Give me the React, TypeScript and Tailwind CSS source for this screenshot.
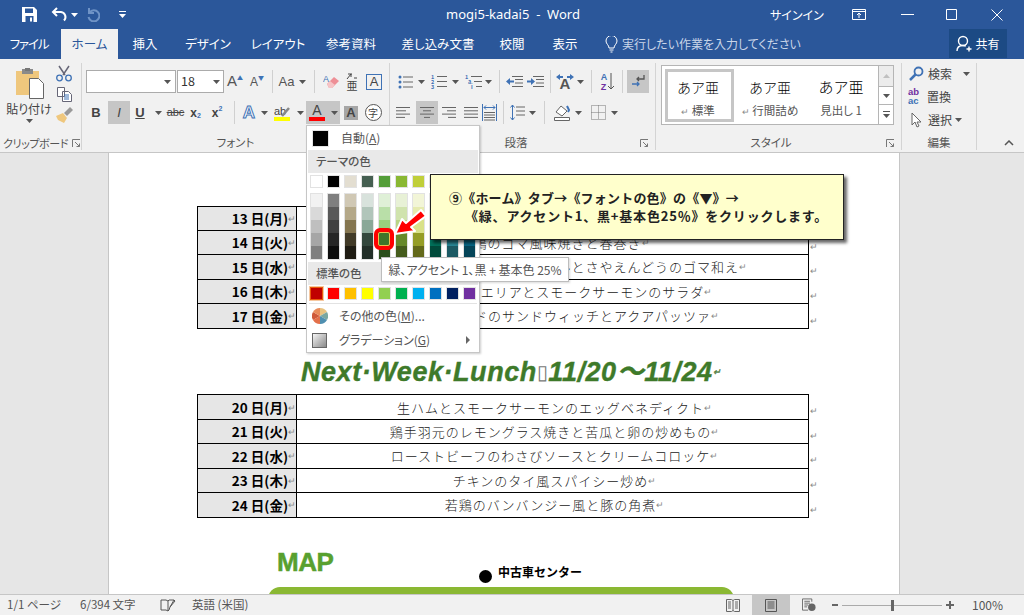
import type { ReactNode } from 'react'

const Caret = ({ color = '#555' }: { color?: string }) => (
  <svg width="7" height="4" viewBox="0 0 7 4"><path d="M0 0h7L3.5 4z" fill={color} /></svg>
)

function Cell({ w, children, active }: { w: string; children?: ReactNode; active?: boolean }) {
  return (
    <div className={`${w} h-[23px] flex items-center justify-center shrink-0 ${active ? 'bg-[#c6c6c6]' : ''}`}>{children}</div>
  )
}

const Sep = ({ w }: { w: string }) => (
  <div className={`${w} h-[23px] flex justify-center shrink-0`}><div className="w-px h-full bg-[#d0d0d0]" /></div>
)

const Launcher = () => (
  <svg width="9" height="9" viewBox="0 0 9 9" fill="none" stroke="#777"><path d="M.5 8V.5H8M3 3l4.5 4.5M7.5 4.5v3h-3" /></svg>
)

const Lines = ({ kind }: { kind: 'l' | 'c' | 'r' | 'j' }) => {
  const rows = kind === 'l' ? [[1, 15], [1, 11], [1, 15], [1, 10]]
    : kind === 'c' ? [[1, 15], [4, 12], [1, 15], [5, 11]]
    : kind === 'r' ? [[1, 15], [6, 15], [1, 15], [7, 15]]
    : [[1, 15], [1, 15], [1, 15], [1, 15]]
  return (
    <svg width="16" height="13" viewBox="0 0 16 13" stroke="#666">
      {rows.map((r, i) => <path key={i} d={`M${r[0]} ${1.5 + i * 3.3}H${r[1]}`} />)}
    </svg>
  )
}

const theme = ['#ffffff', '#000000', '#e3ded1', '#455f51', '#549e39', '#8ab833', '#c0cf3a', '#029676', '#4ab5c4', '#0989b1']
const tints = [
  ['#f2f2f2', '#d9d9d9', '#bfbfbf', '#a6a6a6', '#808080'],
  ['#7f7f7f', '#595959', '#404040', '#262626', '#0d0d0d'],
  ['#d0c8b4', '#b4a888', '#857650', '#423b28', '#1f1c13'],
  ['#d8e2dc', '#b1c5ba', '#8aa898', '#33473c', '#222f28'],
  ['#dff0d7', '#b9dfa8', '#98cf7d', '#3f762a', '#2a4f1c'],
  ['#e8f1d6', '#d0e3ad', '#b9d585', '#67892a', '#455c1c'],
  ['#f2f5d7', '#e6ebaf', '#d9e189', '#959d27', '#63691a'],
  ['#c5f9ee', '#8bf3dd', '#51edcc', '#01705a', '#014b3b'],
  ['#dbf0f3', '#b7e1e7', '#92d3dc', '#2a8897', '#1c5a64'],
  ['#c8eef9', '#92ddf4', '#5bcdee', '#076684', '#044458'],
]
const standard = ['#c00000', '#ff0000', '#ffc000', '#ffff00', '#92d050', '#00b050', '#00b0f0', '#0070c0', '#002060', '#7030a0']

const week1 = [
  ['13 日(月)', ''],
  ['14 日(火)', '若鶏のゴマ風味焼きと春巻き'],
  ['15 日(水)', '真鯛と帆立のクリームのムニエルとさやえんどうのゴマ和え'],
  ['16 日(木)', '魚介と鶏のパエリアとスモークサーモンのサラダ'],
  ['17 日(金)', 'ツナとアボカドのサンドウィッチとアクアパッツァ'],
]
const week2 = [
  ['20 日(月)', '生ハムとスモークサーモンのエッグベネディクト'],
  ['21 日(火)', '鶏手羽元のレモングラス焼きと苦瓜と卵の炒めもの'],
  ['22 日(水)', 'ローストビーフのわさびソースとクリームコロッケ'],
  ['23 日(木)', 'チキンのタイ風スパイシー炒め'],
  ['24 日(金)', '若鶏のバンバンジー風と豚の角煮'],
]

const Ret = () => <span className="text-[#8a8a8a] text-[9px] tracking-normal font-normal">↵</span>

function LunchTable({ rows }: { rows: string[][] }) {
  return (
    <div className="ml-[88px] w-[625px] flex flex-col">
      {rows.map((r, i) => (
        <div key={i} className="flex h-[24.6px] items-center">
          <div className={`w-[612px] h-[25.6px] flex border border-black shrink-0 ${i > 0 ? '-mt-px' : ''}`}>
            <div className="w-[99px] bg-[#e6e6e6] border-r border-black flex items-center justify-end font-bold text-[13.5px] text-black shrink-0">
              {r[0]}<Ret />
            </div>
            <div className="flex-1 flex items-center justify-center pl-[4px] text-[13px] tracking-[1px] font-light text-[#222] [font-feature-settings:normal]">
              {r[1]}{r[1] && <Ret />}
            </div>
          </div>
          <span className="ml-[1px]"><Ret /></span>
        </div>
      ))}
    </div>
  )
}

function Tab({ w, ml, children, active }: { w: string; ml: string; children: ReactNode; active?: boolean }) {
  return (
    <div className={`${w} ${ml} h-[30px] flex items-center justify-center shrink-0 text-[12.5px] ${active ? 'bg-[#f1f1f1] text-[#2b579a]' : 'text-white'}`}>
      {children}
    </div>
  )
}

export default function App() {
  return (
    <div className="relative w-[1024px] h-[615px] overflow-hidden flex flex-col bg-[#e6e6e6] [font-family:'Noto_Sans_CJK_JP','Noto_Sans',sans-serif] [font-feature-settings:'palt'] text-[#444]">
      {/* title bar */}
      <div className="h-[29px] bg-[#2b579a] flex items-center text-white shrink-0">
        <div className="ml-[22px] w-[15px]">
          <svg width="15" height="15" viewBox="0 0 15 15"><path d="M0 0h12l3 3v12H0z" fill="#fff" /><path d="M3 1.500h8v4.500H3z" fill="#2b579a" /><path d="M3.500 9h8v6h-8z" fill="#2b579a" /><path d="M8 10.500h2v4H8z" fill="#fff" /></svg>
        </div>
        <div className="ml-[14px] w-[17px]">
          <svg width="17" height="15" viewBox="0 0 17 15" fill="none" stroke="#fff" strokeWidth="2"><path d="M6 1L2 5l4 4M2 5h8a5 5 0 0 1 3 8.500" /></svg>
        </div>
        <div className="ml-[3px] w-[14px]"><Caret color="#fff" /></div>
        <div className="ml-[1px] w-[14px]">
          <svg width="14" height="15" viewBox="0 0 14 15" fill="none" stroke="#6f93c6" strokeWidth="2"><path d="M3 1v5h5M3.500 5.500A5.500 5.500 0 1 1 2.500 10" /></svg>
        </div>
        <div className="ml-[17px] w-[10px] flex flex-col items-center gap-[2px]">
          <div className="w-[7px] h-px bg-white" />
          <Caret color="#fff" />
        </div>
        <div className="ml-[317px] w-[138px] text-[13px] whitespace-pre text-center [font-family:'Noto_Sans',sans-serif]">mogi5-kadai5  -  Word</div>
        <div className="ml-[188px] w-[50px] text-[12px] text-center whitespace-nowrap">サインイン</div>
        <div className="ml-[32px] w-[14px]">
          <svg width="14" height="11" viewBox="0 0 14 11" fill="none" stroke="#fff"><path d="M.5.500h13v10H.500zM.5 2.500h13M7 9V4.500M5 6l2-2 2 2" /></svg>
        </div>
        <div className="ml-[35px] w-[13px] h-px bg-white" />
        <div className="ml-[32px] w-[12px]">
          <svg width="12" height="12" viewBox="0 0 12 12" fill="none" stroke="#fff"><path d="M.5.500h10v10H.500z" /></svg>
        </div>
        <div className="ml-[33px] w-[12px]">
          <svg width="12" height="12" viewBox="0 0 12 12" stroke="#fff"><path d="M.5.500l11 11M11.500.500l-11 11" /></svg>
        </div>
      </div>

      {/* tabs */}
      <div className="h-[30px] bg-[#2b579a] flex shrink-0">
        <Tab w="w-[46px]" ml="ml-[6px]"><span className="tracking-[-1.2px]">ファイル</span></Tab>
        <Tab w="w-[57px]" ml="ml-[9px]" active>ホーム</Tab>
        <Tab w="w-[40px]" ml="ml-[7px]">挿入</Tab>
        <Tab w="w-[56px]" ml="ml-[15px]">デザイン</Tab>
        <Tab w="w-[60px]" ml="ml-[12px]">レイアウト</Tab>
        <Tab w="w-[64px]" ml="ml-[11px]">参考資料</Tab>
        <Tab w="w-[84px]" ml="ml-[13px]">差し込み文書</Tab>
        <Tab w="w-[40px]" ml="ml-[12px]">校閲</Tab>
        <Tab w="w-[40px]" ml="ml-[13px]">表示</Tab>
        <div className="ml-[20px] w-[14px] flex items-center">
          <svg width="13" height="17" viewBox="0 0 13 17" fill="none" stroke="#fff"><path d="M4 12c0-3-3-4-3-7a5.500 5.500 0 0 1 11 0c0 3-3 4-3 7zM4.500 14h4M5.500 16h2" /></svg>
        </div>
        <div className="ml-[3px] w-[170px] flex items-center text-[12px] text-[#c9d5e8] whitespace-nowrap">実行したい作業を入力してください</div>
        <div className="ml-[157px] w-[58px] h-[29px] bg-[#1c4a84] flex items-center justify-center gap-[3px] text-white text-[12px]">
          <svg width="16" height="17" viewBox="0 0 16 17" fill="none" stroke="#fff" strokeWidth="1.400"><circle cx="7" cy="6" r="4.500" /><path d="M1 16c0-3.500 2.500-5.500 6-5.500 1 0 2 .2 2.800.6M10.500 14h5M13 11.500v5" /></svg>
          共有
        </div>
      </div>

      {/* ribbon */}
      <div className="h-[94px] bg-[#f1f1f1] border-b border-[#c6c6c6] flex shrink-0 pt-[4px] text-[#555]">
        {/* clipboard */}
        <div className="w-[82px] h-[87px] border-r border-[#d4d4d4] flex flex-col shrink-0">
          <div className="flex">
            <div className="w-[53px] pl-[5px] flex flex-col items-center shrink-0">
              <svg className="mt-[5px]" width="29" height="31" viewBox="0 0 29 31"><path d="M1 3h23v24H1z" fill="#efc77d" /><path d="M7 1h11v5H7z" fill="#8a8a8a" /><rect x="10" y="0" width="5" height="3" fill="#777" /><path d="M14.500 10.500h9l5 5v15h-14z" fill="#fff" stroke="#666" /></svg>
              <div className="mt-[2px] text-[12px] leading-[16px] text-[#444] whitespace-nowrap">貼り付け</div>
              <div className="mt-[2px]"><Caret /></div>
            </div>
            <div className="flex flex-col items-center w-[22px] pt-[2px] gap-[5px] shrink-0">
              <svg width="16" height="17" viewBox="0 0 16 17" fill="none" stroke="#667"><path d="M3 1l6 9M13 1l-6 9" strokeWidth="1.500" /><circle cx="3.500" cy="13" r="2.800" stroke="#3f72b5" strokeWidth="1.300" /><circle cx="12.500" cy="13" r="2.800" stroke="#3f72b5" strokeWidth="1.300" /></svg>
              <svg width="15" height="15" viewBox="0 0 15 15" fill="#fff" stroke="#667"><path d="M.5.500h7v9h-7zM5.500 4.500h6l3 3v7h-9z" /><path d="M7 8h5M7 10h5M7 12h5" stroke="#3f72b5" fill="none" /></svg>
              <svg width="17" height="16" viewBox="0 0 17 16"><path d="M0 9l7-3 4 5-3 5-6-3z" fill="#efc77d" /><path d="M8 6l6-6 3 3-6 6z" fill="#999" /></svg>
            </div>
          </div>
          <div className="mt-auto flex items-center h-[14px] pl-[3px]">
            <span className="w-[66px] text-[11px] tracking-[-0.4px] text-[#555] whitespace-nowrap">クリップボード</span>
            <span className="ml-[3px] flex"><Launcher /></span>
          </div>
        </div>

        {/* font */}
        <div className="w-[308px] h-[87px] border-r border-[#d4d4d4] flex flex-col shrink-0">
          <div className="mt-[7px] flex pl-[4px] items-center">
            <div className="w-[90px] h-[23px] bg-white border border-[#ababab] flex items-center justify-end pr-[4px] shrink-0"><Caret /></div>
            <div className="ml-px w-[47px] h-[23px] bg-white border border-[#ababab] flex items-center justify-between px-[3px] shrink-0 text-[12.5px] text-[#333]">18<Caret /></div>
            <Cell w="w-[22px]"><span className="text-[15px] font-medium [font-family:'Liberation_Sans']">A</span><span className="text-[#3f72b5] text-[6px] -mt-[8px]">▲</span></Cell>
            <Cell w="w-[22px]"><span className="text-[12px] font-medium [font-family:'Liberation_Sans']">A</span><span className="text-[#3f72b5] text-[6px] -mt-[8px]">▼</span></Cell>
            <Sep w="w-[8px]" />
            <Cell w="w-[21px]"><span className="text-[13px] font-medium [font-family:'Liberation_Sans']">Aa</span></Cell>
            <Cell w="w-[11px]"><Caret /></Cell>
            <Sep w="w-[12px]" />
            <Cell w="w-[22px]">
              <svg width="17" height="16" viewBox="0 0 17 16">
                <path d="M4 10l7-7 5 4-7 7H6z" fill="#ee8f96" />
                <path d="M4 10l3-3 5 4-3 3H6z" fill="#f6c4c6" />
                <text x="0" y="8" fontSize="9" fill="#3f72b5" fontFamily="Liberation Sans">A</text>
              </svg>
            </Cell>
            <Cell w="w-[20px]">
              <div className="flex flex-col items-center text-[#444]">
                <svg width="12" height="7" viewBox="0 0 12 7" fill="none" stroke="#444"><path d="M1 6l4-5M2 1h4M5 1v3M8 5h3" /></svg>
                <span className="text-[11px] leading-[11px]">亜</span>
              </div>
            </Cell>
            <Cell w="w-[24px]"><div className="w-[16px] h-[16px] border border-[#3f72b5] flex items-center justify-center text-[13px] text-[#444] font-medium [font-family:'Liberation_Sans']">A</div></Cell>
          </div>
          <div className="mt-[8px] flex pl-[3px] items-center [font-family:'Liberation_Sans'] text-[#444]">
            <Cell w="w-[22px]"><b className="text-[13px]">B</b></Cell>
            <div className="w-px" />
            <Cell w="w-[22px]" active><i className="text-[13px]">I</i></Cell>
            <Cell w="w-[20px]"><span className="text-[13px] font-bold underline">U</span></Cell>
            <Cell w="w-[16px]"><Caret /></Cell>
            <Cell w="w-[19px]"><span className="text-[11px] line-through">abc</span></Cell>
            <Cell w="w-[21px]"><b className="text-[12px]">x</b><b className="text-[7px] text-[#3f72b5] mt-[7px]">2</b></Cell>
            <Cell w="w-[22px]"><b className="text-[12px]">x</b><b className="text-[7px] text-[#3f72b5] -mt-[6px]">2</b></Cell>
            <Sep w="w-[12px]" />
            <Cell w="w-[18px]"><span className="text-[17px] font-bold text-white [-webkit-text-stroke:1px_#3f72b5]">A</span></Cell>
            <Cell w="w-[12px]"><Caret /></Cell>
            <Cell w="w-[24px]">
              <div className="flex flex-col items-center">
                <svg width="16" height="12" viewBox="0 0 16 12"><text x="0" y="10" fontSize="11" fill="#444" fontFamily="Liberation Sans">ab</text><path d="M8 11l7-8" stroke="#888" strokeWidth="2.500" /></svg>
                <div className="w-[16px] h-[4px] bg-[#ffff00]" />
              </div>
            </Cell>
            <Cell w="w-[12px]"><Caret /></Cell>
            <div className="w-[34px] h-[23px] bg-[#c6c6c6] flex items-center shrink-0 pl-[3px]">
              <div className="flex flex-col items-center w-[16px]">
                <span className="text-[14px] leading-[13px]">A</span>
                <div className="w-[16px] h-[4px] bg-[#ff0000]" />
              </div>
              <span className="ml-[6px]"><Caret /></span>
            </div>
            <Cell w="w-[22px]"><div className="w-[14px] h-[14px] bg-[#a6a6a6] flex items-center justify-center text-[13px] font-bold">A</div></Cell>
            <Cell w="w-[22px]"><div className="w-[17px] h-[17px] rounded-full border border-[#555] bg-white flex items-center justify-center text-[10px] [font-family:'Noto_Sans_CJK_JP']">字</div></Cell>
          </div>
          <div className="mt-auto h-[14px] flex items-center justify-center text-[11.5px] text-[#555]">フォント</div>
        </div>

        {/* paragraph */}
        <div className="w-[266px] h-[87px] border-r border-[#d4d4d4] flex flex-col shrink-0">
          <div className="mt-[7px] flex items-center">
            <div className="w-[7px]" />
            <Cell w="w-[16px]">
              <svg width="15" height="14" viewBox="0 0 15 14"><path d="M5 2h10M5 7h10M5 12h10" stroke="#666" /><circle cx="2" cy="2" r="1.500" fill="#3f72b5" /><circle cx="2" cy="7" r="1.500" fill="#3f72b5" /><circle cx="2" cy="12" r="1.500" fill="#3f72b5" /></svg>
            </Cell>
            <Cell w="w-[16px]"><Caret /></Cell>
            <div className="w-[2px]" />
            <Cell w="w-[16px]">
              <svg width="16" height="15" viewBox="0 0 16 15"><path d="M6 2.500h10M6 7.500h10M6 12.500h10" stroke="#666" /><text x="0" y="5" fontSize="5.500" fill="#3f72b5" fontWeight="bold">1</text><text x="0" y="10" fontSize="5.500" fill="#3f72b5" fontWeight="bold">2</text><text x="0" y="15" fontSize="5.500" fill="#3f72b5" fontWeight="bold">3</text></svg>
            </Cell>
            <Cell w="w-[16px]"><Caret /></Cell>
            <div className="w-[2px]" />
            <Cell w="w-[17px]">
              <svg width="17" height="15" viewBox="0 0 17 15"><path d="M6 2.500h11M9 7.500h8M11 12.500h6" stroke="#666" /><text x="0" y="5" fontSize="5.500" fill="#3f72b5" fontWeight="bold">1</text><text x="3" y="10" fontSize="5.500" fill="#3f72b5" fontWeight="bold">a</text><text x="6" y="15" fontSize="5.500" fill="#3f72b5" fontWeight="bold">i</text></svg>
            </Cell>
            <Cell w="w-[13px]"><Caret /></Cell>
            <Sep w="w-[8px]" />
            <Cell w="w-[22px]">
              <svg width="17" height="13" viewBox="0 0 17 13"><path d="M6 1.500h11M9 4.500h8M9 8h8M6 11.500h11" stroke="#666" /><path d="M0 6.500L4 3v2.500h4v2H4V10z" fill="#3f72b5" /></svg>
            </Cell>
            <Cell w="w-[20px]">
              <svg width="17" height="13" viewBox="0 0 17 13"><path d="M6 1.500h11M9 4.500h8M9 8h8M6 11.500h11" stroke="#666" /><path d="M8 6.500L4 3v2.500H0v2h4V10z" fill="#3f72b5" /></svg>
            </Cell>
            <Sep w="w-[10px]" />
            <Cell w="w-[20px]">
              <svg width="20" height="17" viewBox="0 0 20 17">
                <path d="M1 4l4-3v2h3v2H5v2zM19 4l-4-3v2h-3v2h3v2z" fill="#3f72b5" />
                <text x="4.500" y="16" fontSize="15" fontWeight="bold" fill="#555" fontFamily="Liberation Sans">A</text>
              </svg>
            </Cell>
            <Cell w="w-[10px]"><Caret /></Cell>
            <Sep w="w-[12px]" />
            <Cell w="w-[22px]">
              <div className="flex items-center">
                <div className="flex flex-col text-[9px] leading-[10px] font-bold [font-family:'Liberation_Sans']"><span className="text-[#3f72b5]">A</span><span className="text-[#7030a0]">Z</span></div>
                <svg width="8" height="17" viewBox="0 0 8 17" stroke="#555" fill="none"><path d="M4 0v16M1 13l3 3 3-3" /></svg>
              </div>
            </Cell>
            <Sep w="w-[6px]" />
            <div className="w-[2px]" />
            <Cell w="w-[22px]" active>
              <svg width="14" height="15" viewBox="0 0 14 15" fill="none" strokeWidth="1.300"><path d="M13 1v4H6M8 3L6 5l2 2" stroke="#555" /><path d="M1 10h7M6 8l2 2-2 2" stroke="#3f72b5" /></svg>
            </Cell>
          </div>
          <div className="mt-[8px] flex items-center">
            <Cell w="w-[26px]"><Lines kind="l" /></Cell>
            <Cell w="w-[22px]" active><Lines kind="c" /></Cell>
            <Cell w="w-[22px]"><Lines kind="r" /></Cell>
            <Cell w="w-[22px]"><Lines kind="j" /></Cell>
            <Cell w="w-[15px]">
              <svg width="15" height="17" viewBox="0 0 15 17" fill="none"><path d="M.5 0v17M14.500 0v17" stroke="#3f72b5" /><path d="M2 3.500h11M2 3.500l2-2M2 3.500l2 2M13 3.500l-2-2M13 3.500l-2 2" stroke="#3f72b5" /><path d="M2 8.500h11M2 11h11M2 13.500h11M2 16h11" stroke="#666" /></svg>
            </Cell>
            <Sep w="w-[12px]" />
            <Cell w="w-[17px]">
              <svg width="15" height="17" viewBox="0 0 15 17" fill="none"><path d="M6 3h9M6 7h9M6 11h9" stroke="#666" /><path d="M2.500 1v15M.5 3.500l2-2.500 2 2.500M.5 13.500l2 2.500 2-2.500" stroke="#3f72b5" /></svg>
            </Cell>
            <Cell w="w-[12px]"><Caret /></Cell>
            <Sep w="w-[12px]" />
            <Cell w="w-[24px]">
              <svg width="18" height="17" viewBox="0 0 18 17" fill="none" stroke="#666"><path d="M3 8l5-6 6 5-5 5z" fill="#fff" /><path d="M1.500 13.500h15v3h-15z" fill="#fff" /><path d="M14 2l2 4-1 2" stroke="#3f72b5" strokeWidth="2" /></svg>
            </Cell>
            <Cell w="w-[8px]"><Caret /></Cell>
            <div className="w-[4px]" />
            <Cell w="w-[24px]">
              <svg width="15" height="15" viewBox="0 0 15 15" stroke="#777" fill="none" strokeDasharray="1 1"><path d="M.5.500h14v14H.500zM7.500.500v14M.5 7.500h14" /></svg>
            </Cell>
            <Cell w="w-[8px]"><Caret /></Cell>
          </div>
          <div className="mt-auto h-[14px] flex items-center text-[11.5px]">
            <span className="flex-1 text-center pl-[2px] text-[#555]">段落</span>
            <span className="mr-[6px] flex"><Launcher /></span>
          </div>
        </div>

        {/* styles */}
        <div className="w-[246px] h-[87px] border-r border-[#d4d4d4] flex flex-col shrink-0">
          <div className="mt-[2px] ml-[5px] w-[233px] h-[60px] border border-[#b5b5b5] bg-white flex">
            <div className="ml-[3px] mt-[3px] w-[69px] h-[53px] border-[3px] border-[#c6c6c6] flex flex-col items-center shrink-0 pr-[3px]">
              <span className="mt-[3px] text-[14px] leading-[24px] text-black font-light [font-feature-settings:normal]">あア亜</span>
              <span className="mt-[3px] text-[11.5px] text-[#555] leading-[16px]"><Ret /> 標準</span>
            </div>
            <div className="w-[72px] flex flex-col items-center pt-[9px] shrink-0">
              <span className="text-[14px] leading-[24px] text-black font-light [font-feature-settings:normal]">あア亜</span>
              <span className="mt-[3px] text-[11.5px] text-[#555] leading-[16px] whitespace-nowrap"><Ret /> 行間詰め</span>
            </div>
            <div className="w-[70px] flex flex-col items-center pt-[8px] shrink-0">
              <span className="text-[15px] leading-[25px] text-black font-light [font-feature-settings:normal]">あア亜</span>
              <span className="mt-[3px] text-[11.5px] text-[#555] leading-[16px] whitespace-nowrap">見出し 1</span>
            </div>
            <div className="ml-auto w-[15px] border-l border-[#b5b5b5] flex flex-col">
              <div className="h-[20px] flex items-center justify-center bg-[#ececec]"><span className="rotate-180 flex"><Caret color="#c0c0c0" /></span></div>
              <div className="h-[19px] border-y border-[#b5b5b5] flex items-center justify-center"><Caret /></div>
              <div className="flex-1 flex flex-col items-center justify-center gap-[2px]"><div className="w-[7px] h-px bg-[#555]" /><Caret /></div>
            </div>
          </div>
          <div className="mt-auto h-[14px] flex items-center text-[11.5px]">
            <span className="flex-1 text-center text-[#555]">スタイル</span>
            <span className="mr-[6px] flex"><Launcher /></span>
          </div>
        </div>

        {/* editing */}
        <div className="w-[75px] h-[87px] border-r border-[#d4d4d4] flex flex-col shrink-0 text-[12px] text-[#444]">
          <div className="-mt-[1px] h-[23px] flex items-center pl-[7px] gap-[4px]">
            <svg width="15" height="15" viewBox="0 0 15 15" fill="none" stroke="#3f72b5" strokeWidth="1.800"><circle cx="9.500" cy="5.500" r="4" /><path d="M6.500 8.500L1 14" strokeWidth="2.500" /></svg>
            検索<span className="ml-[7px] flex"><Caret /></span>
          </div>
          <div className="h-[23px] flex items-center pl-[6px] gap-[2px]">
            <div className="flex flex-col text-[9.5px] leading-[8.5px] font-bold [font-family:'Liberation_Sans'] w-[17px]"><span className="text-[#7030a0]">ab</span><span className="text-[#3f72b5]">ac</span></div>
            置換
          </div>
          <div className="h-[23px] flex items-center pl-[9px] gap-[6px]">
            <svg width="11" height="16" viewBox="0 0 11 16" fill="#fff" stroke="#666"><path d="M1 1v12l3-3 2 5 2-1-2-4h4z" /></svg>
            <span>選択</span><span className="-ml-[3px] flex"><Caret /></span>
          </div>
          <div className="mt-auto h-[14px] flex items-center justify-center text-[11.5px] text-[#555]">編集</div>
        </div>
        <div className="flex-1 h-[87px] flex items-end justify-end pr-[10px] pb-[4px]">
          <svg width="10" height="6" viewBox="0 0 10 6" fill="none" stroke="#555" strokeWidth="1.500"><path d="M1 5l4-4 4 4" /></svg>
        </div>
      </div>

      {/* document */}
      <div className="flex-1 min-h-0 overflow-hidden pl-[108px]">
        <div className="w-[792px] h-full bg-white border-x border-[#c6c6c6] pt-[53px] overflow-hidden">
          <LunchTable rows={week1} />
          <div className="mt-[24px] h-[39px] flex items-center pl-[192px] text-[27px] leading-none font-bold italic tracking-[0.55px] text-[#3e7a2a] [-webkit-text-stroke:0.4px_#3e7a2a] [font-family:'Liberation_Sans','Noto_Sans_CJK_JP'] whitespace-nowrap">
            Next·Week·Lunch<span className="font-thin not-italic text-[20px] text-[#777] [-webkit-text-stroke:0]">▯</span>11/20～11/24<Ret />
          </div>
          <div className="mt-[3px]"><LunchTable rows={week2} /></div>
          <div className="ml-[168px] mt-[29px] flex h-[40px]">
            <div className="w-[60px] text-[#58a02f] text-[26px] leading-[30px] font-bold [font-family:'Liberation_Sans'] [-webkit-text-stroke:0.5px_#58a02f] tracking-[-0.5px]">MAP</div>
            <div className="ml-[142px] mt-[23px] w-[13px] h-[13px] rounded-full bg-black shrink-0" />
            <div className="ml-[6px] mt-[18px] text-[12px] leading-[14px] font-bold text-black [font-feature-settings:normal] whitespace-nowrap">中古車センター</div>
          </div>
          <div className="ml-[159px] w-[466px] h-[12px] bg-[#8ab833] rounded-t-[12px]" />
        </div>
      </div>

      {/* status bar */}
      <div className="h-[21px] bg-[#f1f1f1] border-t border-[#c6c6c6] flex items-center shrink-0 text-[11.5px] text-[#555]">
        <span className="ml-[7px] w-[54px] whitespace-nowrap">1/1 ページ</span>
        <span className="ml-[19px] w-[62px] whitespace-nowrap">6/394 文字</span>
        <span className="ml-[18px] flex w-[16px]">
          <svg width="16" height="13" viewBox="0 0 16 13" fill="none" stroke="#555"><path d="M1 1h5l2 1v10l-2-1H1zM8 2l1-1h5l-4 7-1 3-1 1" /><path d="M14 1l1 1-5 6" /></svg>
        </span>
        <span className="ml-[16px] w-[64px] whitespace-nowrap">英語 (米国)</span>
        <span className="ml-[470px] flex w-[14px]">
          <svg width="14" height="13" viewBox="0 0 14 13" fill="none" stroke="#666"><path d="M.5.500h5l1.500 1 1.500-1h5v12h-5l-1.500-1-1.500 1h-5zM7 1.500v10M2 3h3M2 5h3M2 7h3M2 9h3M9 3h3M9 5h3M9 7h3M9 9h3" /></svg>
        </span>
        <div className="ml-[12px] w-[38px] h-full bg-[#c6c6c6] flex items-center justify-center">
          <svg width="12" height="13" viewBox="0 0 12 13" fill="none" stroke="#555"><path d="M.5.500h11v12H.500zM2.500 3h7M2.500 5h7M2.500 7h7M2.500 9h7" /></svg>
        </div>
        <span className="ml-[12px] flex w-[14px]">
          <svg width="15" height="14" viewBox="0 0 15 14"><path d="M.5.500h10v3M.5.500v12h6M2.500 3h6M2.500 5h6M2.500 7h4M2.500 9h3" fill="none" stroke="#666" /><circle cx="10.500" cy="9.500" r="4" fill="#666" /></svg>
        </span>
        <div className="ml-[16px] w-[6px] h-[2px] bg-[#666]" />
        <div className="ml-[4px] w-[100px] h-[1px] bg-[#aaa] flex justify-center items-center">
          <div className="w-[3px] h-[11px] bg-[#666]" />
        </div>
        <svg className="ml-[4px]" width="8" height="8" viewBox="0 0 8 8" stroke="#666" strokeWidth="2"><path d="M0 4h8M4 0v8" /></svg>
        <span className="ml-[18px] text-[#555] text-[12px] whitespace-nowrap">100%</span>
      </div>

      {/* font colour menu */}
      <div className="absolute left-[306px] top-[125px] w-[174px] h-[228px] bg-white border border-[#c6c6c6] shadow-[1px_1px_2px_rgba(0,0,0,0.2)] flex flex-col text-[12px] text-[#555]">
        <div className="h-[24px] flex items-center pl-[5px] shrink-0">
          <div className="w-[17px] h-[17px] bg-black border border-[#e4e4e4]" />
          <span className="ml-[12px]">自動(<u>A</u>)</span>
        </div>
        <div className="h-[23px] mx-px bg-[#e9e9e9] flex items-center pl-[8px] font-medium text-[11.5px] shrink-0">テーマの色</div>
        <div className="mt-[2px] pl-[3px] flex gap-[4px] shrink-0">
          {theme.map(c => (
            <div key={c} className="w-[13px] h-[13px] border border-[#e2e2e2]" style={{ backgroundColor: c }} />
          ))}
        </div>
        <div className="mt-[5px] pl-[3px] flex gap-[4px] shrink-0">
          {tints.map((col, i) => (
            <div key={i} className="w-[13px] flex flex-col border border-[#e2e2e2]">
              {col.map(c => <div key={c} className="h-[13px]" style={{ backgroundColor: c }} />)}
            </div>
          ))}
        </div>
        <div className="mt-[2px] h-[23px] mx-px bg-[#e9e9e9] flex items-center pl-[8px] font-medium text-[11.5px] shrink-0">標準の色</div>
        <div className="mt-[2px] pl-[3px] flex gap-[4px] shrink-0">
          {standard.map((c, i) => (
            <div key={c} className={`w-[13px] h-[13px] border ${i === 0 ? 'border-[#e8590c] outline outline-[#f6c8a0]' : 'border-[#e2e2e2]'}`} style={{ backgroundColor: c }} />
          ))}
        </div>
        <div className="mt-[3px] mx-[2px] h-px bg-[#e2e2e2] shrink-0" />
        <div className="h-[24px] flex items-center pl-[5px] shrink-0">
          <svg width="16" height="16" viewBox="0 0 16 16">
            <path d="M8 8V0a8 8 0 0 1 7 4z" fill="#e9c27f" /><path d="M8 8l7-4a8 8 0 0 1 0 8z" fill="#7aa7a0" /><path d="M8 8l7 4a8 8 0 0 1-7 4z" fill="#4f8fb0" /><path d="M8 8v8a8 8 0 0 1-7-4z" fill="#e3704a" /><path d="M8 8L1 12a8 8 0 0 1 0-8z" fill="#cf5a3a" /><path d="M8 8L1 4a8 8 0 0 1 7-4z" fill="#e88b5a" />
          </svg>
          <span className="ml-[11px]">その他の色(<u>M</u>)...</span>
        </div>
        <div className="h-[24px] flex items-center pl-[5px] shrink-0">
          <div className="w-[15px] h-[15px] border border-[#666] bg-linear-to-br from-[#f5f5f5] to-[#8a8a8a]" />
          <span className="ml-[12px]">グラデーション(<u>G</u>)</span>
          <span className="ml-auto mr-[9px] w-0 h-0 border-y-[4px] border-y-transparent border-l-[4px] border-l-[#666]" />
        </div>
      </div>

      {/* tooltip */}
      <div className="absolute left-[381px] top-[257px] w-[188px] h-[25px] bg-white border border-[#bdbdbd] shadow-[1px_1px_2px_rgba(0,0,0,0.15)] flex items-center justify-center text-[12px] text-[#555] whitespace-nowrap">
        緑、アクセント 1、黒 + 基本色 25%
      </div>

      {/* red ring on the swatch */}
      <div className="absolute left-[374px] top-[228px] w-[20px] h-[22px] border-[4px] border-[#ff0000] rounded-[6px] bg-[#3f762a] outline outline-[#f0c050] -outline-offset-[5px]" />

      {/* arrow */}
      <svg className="absolute left-[393px] top-[208px]" width="38" height="28" viewBox="0 0 38 28">
        <path d="M2 26L9 11l4 4L28 2l5 6-15 11 4 4z" fill="#ff0000" stroke="#fff" strokeWidth="2" strokeLinejoin="round" />
      </svg>

      {/* callout */}
      <div className="absolute left-[430px] top-[174px] w-[414px] h-[66px] bg-[#ffffcc] border border-[#222] shadow-[3px_3px_3px_rgba(0,0,0,0.6)] flex flex-col justify-center pl-[18px] text-[13px] leading-[18px] font-bold text-[#222] whitespace-pre [font-feature-settings:normal]">
        <div className="tracking-[0.2px]">⑨《ホーム》タブ→《フォントの色》の《▼》→</div>
        <div className="pl-[16px] tracking-[0.8px]">《緑、アクセント1、黒+基本色25％》をクリックします。</div>
      </div>
    </div>
  )
}
